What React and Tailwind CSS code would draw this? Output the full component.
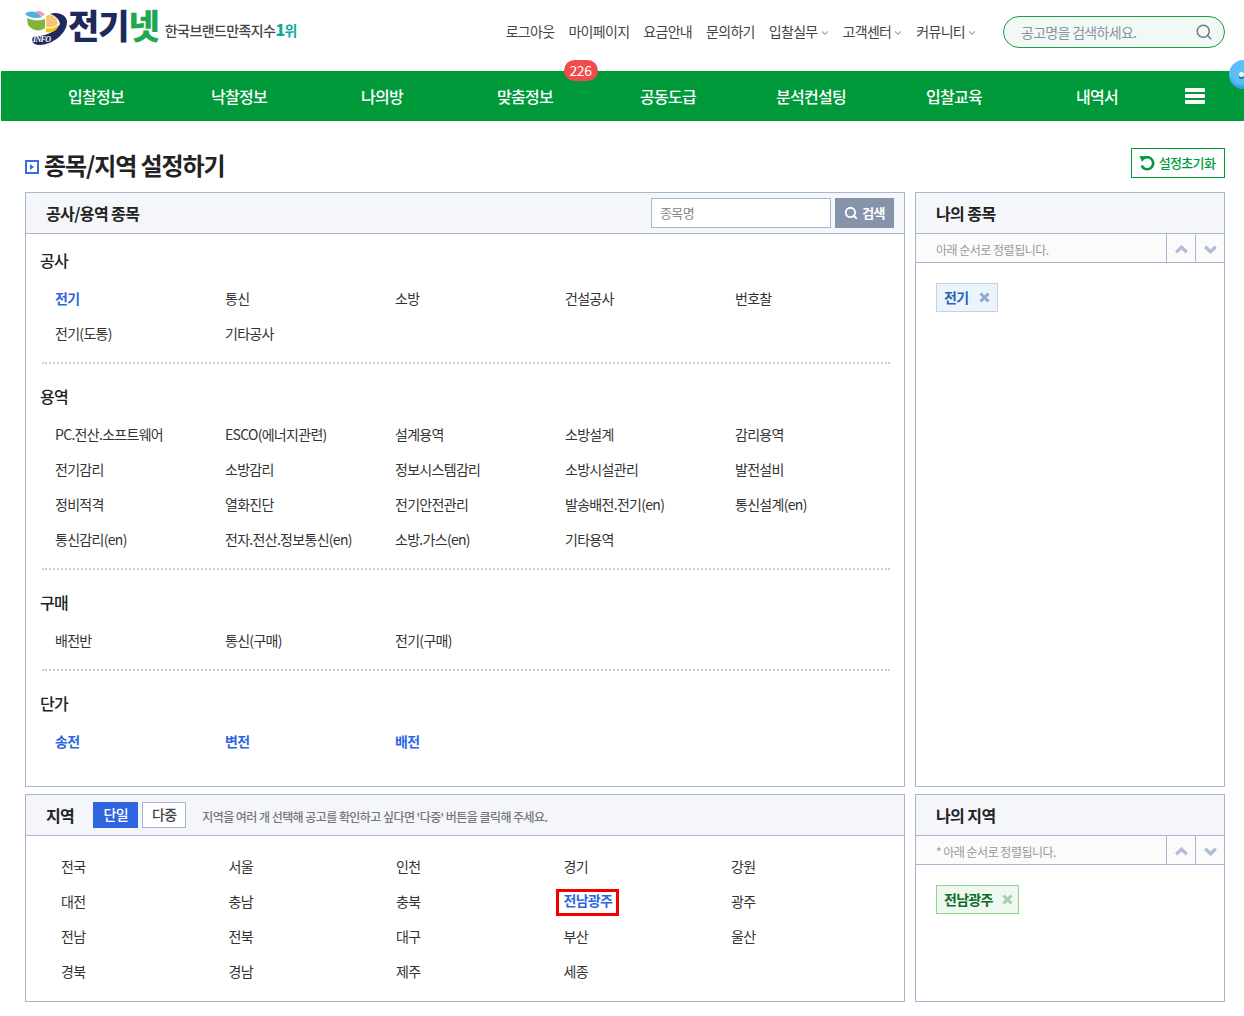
import React from 'react';
import { ChevronDown, Search } from 'lucide-react';

const topLinks = [
    ['로그아웃'], ['마이페이지'], ['요금안내'], ['문의하기'],
    ['입찰실무', true], ['고객센터', true], ['커뮤니티', true],
];

const navItems = ['입찰정보', '낙찰정보', '나의방', '맞춤정보', '공동도급', '분석컨설팅', '입찰교육', '내역서'];

const sections = [
    { title: '공사', items: ['전기', '통신', '소방', '건설공사', '번호찰', '전기(도통)', '기타공사'], active: ['전기'] },
    {
        title: '용역',
        items: [
            'PC.전산.소프트웨어', 'ESCO(에너지관련)', '설계용역', '소방설계', '감리용역',
            '전기감리', '소방감리', '정보시스템감리', '소방시설관리', '발전설비',
            '정비적격', '열화진단', '전기안전관리', '발송배전.전기(en)', '통신설계(en)',
            '통신감리(en)', '전자.전산.정보통신(en)', '소방.가스(en)', '기타용역',
        ],
    },
    { title: '구매', items: ['배전반', '통신(구매)', '전기(구매)'] },
    { title: '단가', items: ['송전', '변전', '배전'], active: ['송전', '변전', '배전'], last: true },
];

const regions = [
    '전국', '서울', '인천', '경기', '강원',
    '대전', '충남', '충북', '전남광주', '광주',
    '전남', '전북', '대구', '부산', '울산',
    '경북', '경남', '제주', '세종',
];

const Logo = () => (
    <svg width="43" height="36" viewBox="0 0 43 36" className="shrink-0">
        <path d="M25 4 C33 1 42 5 42 12 C42 23 28 35 14 35 C8 35 6 31 8 27 C14 27 30 24 35 15 C35 10 31 6 25 4 Z" fill="#1f2a5c" />
        <path d="M9 26 C20 27 30 23 35 14 L38 20 L22 33 L10 33 Z" fill="#1f2a5c" />
        <path d="M0 4 C4 0 12 1 17 7 C11 9 4 8 0 4 Z" fill="#4fb3d9" />
        <path d="M10 2 C13 0 18 1 20 5 L17 6 Z" fill="#f29ab8" />
        <path d="M2 8 C8 11 15 11 20 9 L20 18 C15 22 7 21 3 15 Z" fill="#7fb53c" />
        <path d="M21 6 C26 3 33 8 33 14 C30 17 25 18 21 17 Z" fill="#f6c677" />
        <path d="M21 18 C25 19 30 18 33 15 L32 19 C29 22 24 23 21 22 Z" fill="#f1c40f" />
        <text x="8" y="32" fontSize="8" fontWeight="900" fontStyle="italic" fill="#fff" fontFamily="'Liberation Serif', serif">INFO</text>
    </svg>
);

const RemoveIcon = ({ className }) => (
    <svg width="11" height="11" viewBox="0 0 11 11" className={className}>
        <path d="M1.5 1.5 L9.5 9.5 M9.5 1.5 L1.5 9.5" fill="none" stroke="currentColor" strokeWidth="3" />
    </svg>
);

const UpDown = () => (
    <>
        <button className="w-[29px] h-full border-l border-[#a9b6cf] flex items-center justify-center pl-[1px] pt-[2px]">
            <svg width="13" height="9" viewBox="0 0 13 9"><path d="M1.2 7.2 L6.5 2.2 L11.8 7.2" fill="none" stroke="#b3bed4" strokeWidth="3.4" /></svg>
        </button>
        <button className="w-[29px] h-full border-l border-[#a9b6cf] flex items-center justify-center pl-[1px] pt-[2px]">
            <svg width="13" height="9" viewBox="0 0 13 9"><path d="M1.2 1.8 L6.5 6.8 L11.8 1.8" fill="none" stroke="#b3bed4" strokeWidth="3.4" /></svg>
        </button>
    </>
);

const SidePanel = ({ title, note, children }) => (
    <div className="w-[310px] border border-[#a9b6cf] flex flex-col">
        <div className="h-[41px] shrink-0 bg-[#f4f6fa] border-b border-[#a9b6cf] flex items-center pl-[20px] text-[16px] font-bold text-[#222] tracking-[-0.6px]">{title}</div>
        <div className="h-[29px] shrink-0 bg-[#fbfbfb] border-b border-[#a9b6cf] flex items-center">
            <span className="flex-1 pl-[20px] pt-[3px] text-[12px] text-[#999] tracking-[-0.5px]">{note}</span>
            <UpDown />
        </div>
        <div className="pt-[20px] pl-[20px]">{children}</div>
    </div>
);

export default function App() {
    return (
        <div className="w-[1244px] h-[1016px] overflow-hidden bg-white text-[14px] tracking-[-0.7px] text-[#333] font-['Noto_Sans_CJK_KR','Noto_Sans',sans-serif]">
            {/* Top bar */}
            <header className="h-[71px] flex items-start pl-[25px] pr-[19px]">
                <div className="flex items-center h-[44px] mt-[3px]">
                    <div className="pt-[6px]"><Logo /></div>
                    <span className="text-[34px] leading-none font-black text-[#1f2a5c] tracking-[-1px]">전기<span className="text-[#1fa84f]">넷</span></span>
                    <span className="ml-[6px] mt-[11px] text-[14px] font-medium text-[#444] tracking-[-0.6px]">한국브랜드만족지수<span className="text-[16px] leading-none font-black text-[#0aa89e]">1</span><span className="text-[#0aa89e] font-bold">위</span></span>
                </div>
                <nav className="ml-auto mt-[21px] flex items-center gap-[14px] h-[20px] text-[#444]">
                    {topLinks.map(([label, more]) => (
                        <a key={label} className="flex items-center whitespace-nowrap">
                            {label}
                            {more && <ChevronDown size={10} strokeWidth={3} className="ml-[2px] mr-[-1px] mt-[3px] text-[#a9b2c0]" />}
                        </a>
                    ))}
                </nav>
                <div className="ml-[27px] mt-[16px] w-[222px] h-[32px] rounded-full border border-[#1f9a45] bg-[#f2f9f4] flex items-center pl-[17px] pr-[11px]">
                    <span className="flex-1 text-[#8a93a3]">공고명을 검색하세요.</span>
                    <Search size={18} strokeWidth={2} className="text-[#6f7a8c]" />
                </div>
            </header>

            {/* Green navigation */}
            <div className="relative ml-[1px] h-[50px] bg-[#009a3a] flex items-center pl-[23.5px] text-white text-[16px] font-medium">
                {navItems.map((item) => (
                    <a key={item} className="relative w-[143px] text-center">
                        {item}
                        {item === '맞춤정보' && (
                            <span className="absolute left-[110px] top-[-24px] w-[34px] h-[21px] rounded-full bg-[#f04c4c] text-[14px] leading-[21px] font-normal tracking-[-0.5px]">226</span>
                        )}
                    </a>
                ))}
                <div className="ml-[16.5px] w-[20px] flex flex-col gap-[2px]">
                    <span className="h-[4px] bg-white rounded-[1px]"></span>
                    <span className="h-[4px] bg-white rounded-[1px]"></span>
                    <span className="h-[4px] bg-white rounded-[1px]"></span>
                </div>
                <div className="absolute left-[1228px] top-[-11px] w-[30px] h-[29px] rounded-full bg-[#5cc0f6] shadow-[inset_-2px_-3px_4px_#2f93d8]">
                    <span className="absolute left-[10px] top-[12px] w-[5px] h-[5px] rounded-full bg-white shadow-[0_2px_0_#1f6fb0]"></span>
                </div>
            </div>

            {/* Page title */}
            <div className="h-[71px] pl-[25px] pr-[19px] flex items-center pt-[19px]">
                <span className="w-[14px] h-[14px] border-2 border-[#3b6be0] flex items-center justify-center mt-[2px]">
                    <span className="w-0 h-0 border-y-[3px] border-y-transparent border-l-[4px] border-l-[#3b6be0]"></span>
                </span>
                <h1 className="ml-[5px] mb-[2px] text-[24px] font-bold text-[#222] tracking-[-1.1px]">종목/지역 설정하기</h1>
                <button className="ml-auto mb-[7px] w-[94px] h-[30px] border border-[#009a3a] flex items-center justify-center gap-[4px] pr-[2px] text-[13px] font-medium text-[#009a3a]">
                    <svg width="16" height="16" viewBox="0 0 16 16">
                        <path d="M4.6 3.4 A6 6 0 1 1 2.6 10.5" fill="none" stroke="currentColor" strokeWidth="2.6" />
                        <path d="M0.5 1 L7.2 1.3 L3.2 7 Z" fill="currentColor" />
                    </svg>
                    설정초기화
                </button>
            </div>

            {/* Categories row */}
            <div className="flex gap-[10px] pl-[25px] h-[595px]">
                <div className="w-[880px] border border-[#a9b6cf]">
                    <div className="h-[41px] bg-[#f4f6fa] border-b border-[#a9b6cf] flex items-center pl-[20px] pr-[10px] font-bold text-[16px] text-[#222] tracking-[-0.6px]">
                        공사/용역 종목
                        <div className="ml-auto w-[180px] h-[30px] bg-white border border-[#a9b6cf] flex items-center pl-[8px] text-[13px] font-normal text-[#888]">종목명</div>
                        <button className="ml-[4px] w-[59px] h-[30px] bg-[#8593ab] text-white text-[13px] font-bold flex items-center justify-center gap-[4px]">
                            <Search size={14} strokeWidth={3.2} />
                            검색
                        </button>
                    </div>
                    <div className="pl-[14px] pr-[14px] pt-[15px]">
                        {sections.map((s) => (
                            <section key={s.title} className={s.last ? '' : 'border-b-2 border-dotted border-[#cccccc] mb-[21px] pb-[10px] ml-[2px]'}>
                                <h3 className={`h-[24px] leading-[22px] mb-[9px] text-[16px] font-medium text-[#222] ${s.last ? '' : 'ml-[-2px]'}`}>{s.title}</h3>
                                <div className={`grid grid-cols-[repeat(5,170px)] ${s.last ? 'pl-[15px]' : 'pl-[13px]'}`}>
                                    {s.items.map((item) => {
                                        const on = s.active && s.active.includes(item);
                                        return (
                                            <a key={item} className={`h-[35px] leading-[33px] whitespace-nowrap ${on ? 'text-[#2f66e0] font-bold' : 'text-[#333]'}`}>{item}</a>
                                        );
                                    })}
                                </div>
                            </section>
                        ))}
                    </div>
                </div>
                <SidePanel title="나의 종목" note="아래 순서로 정렬됩니다.">
                    <span className="inline-flex items-center h-[29px] pl-[7px] pr-[7px] bg-[#ebf3fb] border border-[#c3d2e6] text-[#2a62b8] font-bold">
                        전기
                        <RemoveIcon className="ml-[11px] text-[#8fa8cc]" />
                    </span>
                </SidePanel>
            </div>

            {/* Regions row */}
            <div className="flex gap-[10px] pl-[25px] mt-[7px] h-[208px]">
                <div className="w-[880px] border border-[#a9b6cf]">
                    <div className="h-[41px] bg-[#f4f6fa] border-b border-[#a9b6cf] flex items-center pl-[20px] font-bold text-[16px] text-[#222] tracking-[-0.6px]">
                        지역
                        <span className="ml-[19px] w-[45px] h-[26px] bg-[#2f66e0] text-white text-[14px] font-medium flex items-center justify-center pb-[2px]">단일</span>
                        <span className="ml-[4px] w-[44px] h-[26px] bg-white border border-[#a9b6cf] text-[#444] text-[14px] font-medium flex items-center justify-center pb-[2px]">다중</span>
                        <span className="ml-[16px] pt-[3px] text-[12px] font-medium text-[#777] tracking-[-0.55px]">지역을 여러 개 선택해 공고를 확인하고 싶다면 '다중' 버튼을 클릭해 주세요.</span>
                    </div>
                    <div className="grid grid-cols-[repeat(5,167.5px)] pl-[35px] pt-[13px]">
                        {regions.map((r) => (
                            <div key={r} className="h-[35px] flex items-center">
                                {r === '전남광주' ? (
                                    <a className="ml-[-5px] mt-[2px] pl-[5px] pr-[4px] h-[21px] leading-[17px] text-[#2f66e0] font-bold outline-[3px] outline-[#f50000] whitespace-nowrap">{r}</a>
                                ) : (
                                    <a className="text-[#333] leading-[19px] pb-[1px]">{r}</a>
                                )}
                            </div>
                        ))}
                    </div>
                </div>
                <SidePanel title="나의 지역" note="* 아래 순서로 정렬됩니다.">
                    <span className="inline-flex items-center h-[29px] pl-[7px] pr-[5px] bg-[#eef8ee] border border-[#8fd68f] text-[#0b6b2b] font-bold">
                        전남광주
                        <RemoveIcon className="ml-[9px] text-[#a5cfae]" />
                    </span>
                </SidePanel>
            </div>
        </div>
    );
}
